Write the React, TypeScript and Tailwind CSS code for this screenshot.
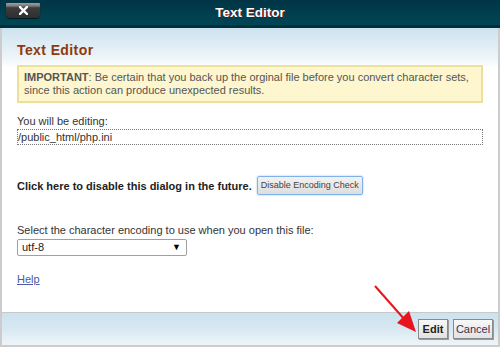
import React from "react";

export default function App() {
  return (
    <div
      className="relative w-[500px] h-[347px] bg-[#cccccc] flex flex-col overflow-hidden"
      style={{ fontFamily: '"Liberation Sans", Arial, sans-serif' }}
    >
      {/* Title bar */}
      <div className="relative h-[28px] shrink-0 flex items-center justify-center bg-[linear-gradient(180deg,#003444_0%,#01404f_60%,#004555_100%)] border-b-[3px] border-[#00303d]">
        <div className="absolute left-[6px] top-[3px] w-[34px] h-[15px] rounded-b-[4px] rounded-t-[1px] bg-[linear-gradient(180deg,#a0a0a0_0%,#7a7a7a_20%,#3c3c3c_32%,#2e2e2e_100%)] shadow-[0_1px_1px_rgba(0,0,0,0.6)] flex items-center justify-center">
          <svg width="9" height="9" viewBox="0 0 9 9">
            <path d="M1 1 L8 8 M8 1 L1 8" stroke="#ffffff" strokeWidth="2.4" strokeLinecap="square" />
          </svg>
        </div>
        <span className="text-white font-bold text-[13.5px] pt-[1px] [text-shadow:1px_1px_0_#6b1010]">Text Editor</span>
      </div>

      {/* Body */}
      <div className="flex-1 mx-[2px] flex flex-col bg-white">
        <div className="flex-1 px-[15px] bg-[linear-gradient(180deg,#cde2ef_0px,#eef5f9_30px,#ffffff_40px)]">
          <h1 className="mt-[14px] text-[14px] font-bold text-[#8f3a0e] tracking-[0.4px] leading-[16px]">Text Editor</h1>
          <p className="mt-[7px] border-2 border-[#ece09b] bg-[#fdf6ce] pl-[5px] pr-[2px] pt-[4px] pb-[5px] text-[11px] leading-[12.5px] text-[#555555]">
            <b>IMPORTANT</b>: Be certain that you back up the orginal file before you convert character sets, since this action can produce unexpected results.
          </p>
          <div className="mt-[12px] text-[11px] leading-[12px] text-[#333333]">You will be editing:</div>
          <div className="mt-[2px] border border-dotted border-[#777777] h-[16px] px-0 text-[11px] leading-[14px] text-[#333333] bg-white">/public_html/php.ini</div>
          <div className="mt-[34px] flex items-start">
            <span className="text-[11px] font-bold text-[#222222] leading-[14px]">Click here to disable this dialog in the future.</span>
            <button className="ml-[5px] mt-[-3px] h-[19px] px-[3px] border border-[#7fb2ec] rounded-[2px] shadow-[0_0_2px_#8cc0f5] bg-[linear-gradient(180deg,#f2f2f2,#dedede)] text-[9px] text-[#444444] leading-[15px]">
              Disable Encoding Check
            </button>
          </div>
          <div className="mt-[29px] text-[11px] leading-[12px] text-[#333333]">Select the character encoding to use when you open this file:</div>
          <div className="mt-[3px] w-[170px] h-[17px] border border-[#a0a0a0] rounded-[2px] bg-white flex items-center justify-between pl-[4px] pr-[5px] text-[11px] text-[#222222]">
            <span>utf-8</span>
            <span className="text-[9px] text-black">▼</span>
          </div>
          <a href="#" className="block mt-[17px] w-fit text-[11px] leading-[12px] text-[#4a5aa8] underline">Help</a>
        </div>
        {/* Footer */}
        <div className="h-[33px] shrink-0 border-t border-[#c8c8c8] bg-[linear-gradient(180deg,#cde2ef_0%,#d6e7f1_45%,#eef5f9_100%)] flex items-start justify-end gap-[5px] pr-[5px] pt-[6px]">
          <button className="w-[30px] h-[20px] border border-[#8a8a8a] bg-[linear-gradient(180deg,#f8f8f8,#e2e2e2)] shadow-[1px_1px_0_#9a9a9a] text-[11px] font-bold text-[#222222]">Edit</button>
          <button className="w-[40px] h-[20px] border border-[#8a8a8a] bg-[linear-gradient(180deg,#f8f8f8,#e2e2e2)] shadow-[1px_1px_0_#9a9a9a] text-[11px] text-[#333355]">Cancel</button>
        </div>
      </div>
      <div className="h-[2px] shrink-0" />

      {/* Red arrow annotation */}
      <svg className="absolute left-0 top-0 pointer-events-none" width="500" height="347">
        <line x1="375" y1="286" x2="405" y2="320" stroke="#e8141c" strokeWidth="2" />
        <polygon points="416,332 397,323 409,311" fill="#e8141c" />
      </svg>
    </div>
  );
}
